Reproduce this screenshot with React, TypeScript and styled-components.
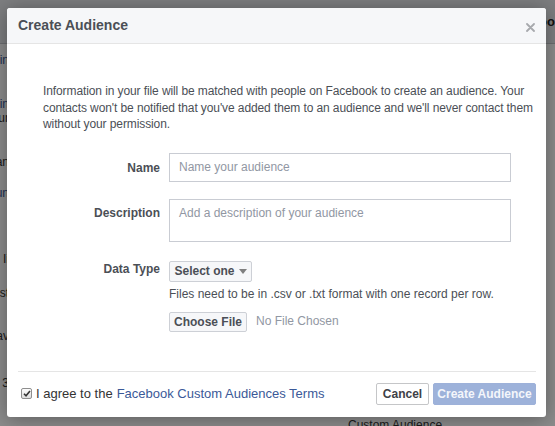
import React from "react";
import styled, { createGlobalStyle } from "styled-components";

const GlobalStyle = createGlobalStyle`
  html, body {
    margin: 0;
    padding: 0;
    width: 555px;
    height: 426px;
    overflow: hidden;
    font-family: "Liberation Sans", Arial, Helvetica, sans-serif;
  }
`;

const Screen = styled.div`
  position: relative;
  width: 555px;
  height: 426px;
  overflow: hidden;
  background: #ffffff;
`;

/* page that sits behind the dimmed overlay */
const Page = styled.div`
  display: flex;
  flex-direction: column;
  height: 100%;
`;
const PageHeader = styled.div`
  height: 43px;
  background: #e4e5e9;
  border-bottom: 1px solid #c5c7cc;
  display: flex;
  justify-content: flex-end;
  align-items: center;
  font-size: 13px;
  font-weight: bold;
  color: #222;
`;
const PageBody = styled.div`
  display: flex;
  flex: 1;
`;
const SideList = styled.div`
  width: 9px;
  overflow: hidden;
  display: flex;
  flex-direction: column;
  align-items: flex-end;
  font-size: 12px;
  color: #222;
`;
const SideItem = styled.div<{ $gap: number; $link?: boolean }>`
  margin-top: ${(p) => p.$gap}px;
  white-space: nowrap;
  line-height: 14px;
  color: ${(p) => (p.$link ? "#3b5998" : "#333")};
`;
const PageMain = styled.div`
  flex: 1;
  display: flex;
  align-items: flex-end;
  padding: 0 0 0 339px;
  font-size: 12px;
  color: #333;
`;
const PageCaption = styled.span`
  margin-bottom: -6px;
`;

const Overlay = styled.div`
  position: absolute;
  inset: 0;
  background: rgba(0, 0, 0, 0.45);
`;

const Dialog = styled.div`
  position: absolute;
  left: 7px;
  top: 8px;
  width: 539px;
  height: 409px;
  background: #fff;
  border-radius: 3px;
  box-shadow: 0 2px 20px rgba(0, 0, 0, 0.35);
  display: flex;
  flex-direction: column;
  overflow: hidden;
`;

const Header = styled.div`
  height: 35px;
  background: #f6f7f9;
  border-bottom: 1px solid #e5e5e5;
  display: flex;
  align-items: center;
  justify-content: space-between;
  padding: 0 10px 0 11px;
`;
const Title = styled.h2`
  margin: 0;
  font-size: 14px;
  font-weight: bold;
  color: #4b4f56;
  margin-top: -1px;
`;
const Close = styled.button`
  border: 0;
  background: none;
  padding: 0;
  width: 12px;
  height: 12px;
  margin-top: 4px;
  display: flex;
  align-items: center;
  justify-content: center;
  cursor: pointer;
`;

const Body = styled.div`
  flex: 1;
  padding: 39px 30px 0 36px;
  display: flex;
  flex-direction: column;
`;
const Intro = styled.p`
  margin: 0 0 20px 0;
  font-size: 12px;
  line-height: 16.5px;
  letter-spacing: -0.1px;
  white-space: nowrap;
  color: #4b4f56;
`;

const FormRow = styled.div<{ $gap?: number }>`
  display: grid;
  grid-template-columns: 117px 342px;
  column-gap: 9px;
  margin-bottom: ${(p) => p.$gap ?? 0}px;
`;
const Label = styled.label<{ $top: number }>`
  text-align: right;
  font-size: 12px;
  font-weight: bold;
  color: #4b4f56;
  padding-top: ${(p) => p.$top}px;
`;
const Field = styled.div`
  display: flex;
  flex-direction: column;
  align-items: flex-start;
`;
const TextInput = styled.input`
  box-sizing: border-box;
  width: 342px;
  height: 29px;
  border: 1px solid #c9ccd3;
  padding: 0 9px;
  font-family: inherit;
  font-size: 12px;
  color: #333;
  outline: none;
  &::placeholder {
    color: #9197a3;
  }
`;
const TextArea = styled.textarea`
  box-sizing: border-box;
  width: 342px;
  height: 43px;
  border: 1px solid #c9ccd3;
  padding: 6px 9px;
  font-family: inherit;
  font-size: 12px;
  color: #333;
  resize: none;
  outline: none;
  &::placeholder {
    color: #9197a3;
  }
`;

const GrayButton = styled.button<{ $w: number; $h: number }>`
  box-sizing: border-box;
  width: ${(p) => p.$w}px;
  height: ${(p) => p.$h}px;
  background: #f6f7f9;
  border: 1px solid #cdd0d6;
  border-radius: 2px;
  font-family: inherit;
  font-size: 12px;
  font-weight: bold;
  color: #4b4f56;
  display: flex;
  align-items: center;
  justify-content: center;
  gap: 4px;
  padding: 0;
`;
const Caret = styled.span`
  width: 0;
  height: 0;
  border-left: 4px solid transparent;
  border-right: 4px solid transparent;
  border-top: 5px solid #7f7f7f;
  margin-top: 1px;
`;
const Hint = styled.div`
  font-size: 12px;
  line-height: 14px;
  color: #4b4f56;
  margin: 5px 0 11px 0;
`;
const FileRow = styled.div`
  display: flex;
  align-items: center;
  gap: 9px;
`;
const NoFile = styled.span`
  font-size: 12px;
  color: #9197a3;
  margin-top: -1px;
`;

const Footer = styled.div`
  margin: 0 10px 0 11px;
  border-top: 1px solid #e5e5e5;
  height: 43px;
  display: flex;
  align-items: center;
  justify-content: space-between;
  padding: 0 0 2px 3px;
`;
const Agree = styled.label`
  display: flex;
  align-items: center;
  gap: 4px;
  font-size: 13px;
  color: #333;
`;
const Check = styled.span`
  box-sizing: border-box;
  width: 11px;
  height: 11px;
  border: 1px solid #8e8e8e;
  border-radius: 2px;
  background: linear-gradient(#fdfdfd, #dcdcdc);
  display: flex;
  align-items: center;
  justify-content: center;
`;
const TermsLink = styled.a`
  color: #3b5998;
  text-decoration: none;
`;
const Actions = styled.div`
  display: flex;
  gap: 4px;
  margin-top: 1px;
`;
const ActionButton = styled.button<{ $primary?: boolean; $w: number }>`
  box-sizing: border-box;
  width: ${(p) => p.$w}px;
  height: 22px;
  border-radius: 2px;
  font-family: inherit;
  font-size: 12px;
  font-weight: bold;
  padding: 0;
  border: 1px solid ${(p) => (p.$primary ? "#9db1d9" : "#c5c6c8")};
  background: ${(p) => (p.$primary ? "#9db2da" : "#ffffff")};
  color: ${(p) => (p.$primary ? "#f4f6fb" : "#3e4147")};
`;

export default function App() {
  return (
    <Screen>
      <GlobalStyle />
      <Page>
        <PageHeader>Foo</PageHeader>
        <PageBody>
          <SideList>
            <SideItem $gap={9} $link>Audiences in</SideItem>
            <SideItem $gap={30} $link>Insights in</SideItem>
            <SideItem $gap={0}>your</SideItem>
            <SideItem $gap={30}>Plan</SideItem>
            <SideItem $gap={17} $link>Run</SideItem>
            <SideItem $gap={52}>Ii</SideItem>
            <SideItem $gap={20}>Lst</SideItem>
            <SideItem $gap={29}>Sav</SideItem>
            <SideItem $gap={33}>3</SideItem>
          </SideList>
          <PageMain>
            <PageCaption>Custom Audience</PageCaption>
          </PageMain>
        </PageBody>
      </Page>
      <Overlay />
      <Dialog>
        <Header>
          <Title>Create Audience</Title>
          <Close aria-label="Close">
            <svg width="9" height="9" viewBox="0 0 9 9">
              <path d="M1 1 L8 8 M8 1 L1 8" stroke="#a7a9ad" strokeWidth="1.8" strokeLinecap="round" />
            </svg>
          </Close>
        </Header>
        <Body>
          <Intro>
            Information in your file will be matched with people on Facebook to create an audience. Your
            <br />
            contacts won't be notified that you've added them to an audience and we'll never contact them
            <br />
            without your permission.
          </Intro>
          <FormRow $gap={17}>
            <Label $top={8}>Name</Label>
            <Field>
              <TextInput placeholder="Name your audience" />
            </Field>
          </FormRow>
          <FormRow $gap={19}>
            <Label $top={7}>Description</Label>
            <Field>
              <TextArea placeholder="Add a description of your audience" />
            </Field>
          </FormRow>
          <FormRow>
            <Label $top={1}>Data Type</Label>
            <Field>
              <GrayButton $w={83} $h={21}>
                Select one <Caret />
              </GrayButton>
              <Hint>Files need to be in .csv or .txt format with one record per row.</Hint>
              <FileRow>
                <GrayButton $w={78} $h={20}>Choose File</GrayButton>
                <NoFile>No File Chosen</NoFile>
              </FileRow>
            </Field>
          </FormRow>
        </Body>
        <Footer>
          <Agree>
            <Check>
              <svg width="8" height="7" viewBox="0 0 8 7">
                <path d="M1 3.8 L3 5.8 L7 1" fill="none" stroke="#333" strokeWidth="1.6" />
              </svg>
            </Check>
            I agree to the <TermsLink href="#">Facebook Custom Audiences Terms</TermsLink>
          </Agree>
          <Actions>
            <ActionButton $w={53}>Cancel</ActionButton>
            <ActionButton $primary $w={103}>Create Audience</ActionButton>
          </Actions>
        </Footer>
      </Dialog>
    </Screen>
  );
}
